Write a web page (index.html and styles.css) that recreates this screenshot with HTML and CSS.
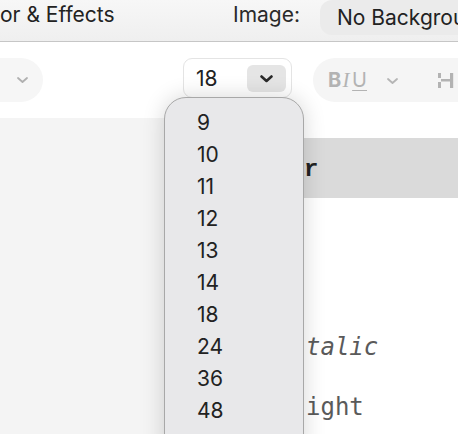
FILE: index.html
```html
<!DOCTYPE html>
<html>
<head>
<meta charset="utf-8">
<link rel="stylesheet" href="styles.css">
</head>
<body>
<div class="header">
  <span class="hdr-title">or &amp; Effects</span>
  <span class="hdr-label">Image:</span>
  <span class="hdr-pill">No Background</span>
</div>
<div class="toolbar">
  <div class="sel-left">
    <svg class="chev-light" width="11" height="6" viewBox="0 0 11 6"><polyline points="1,1 5.5,5 10,1" fill="none" stroke="#b0b0b0" stroke-width="1.8" stroke-linecap="round" stroke-linejoin="round"/></svg>
  </div>
  <div class="size-combo">
    <span class="size-val">18</span>
    <span class="size-btn">
      <svg width="13" height="8" viewBox="0 0 13 8"><polyline points="1.5,1.5 6.5,6 11.5,1.5" fill="none" stroke="#2a2a2a" stroke-width="2.6" stroke-linecap="round" stroke-linejoin="round"/></svg>
    </span>
  </div>
  <div class="style-pill">
    <span class="biu"><span class="b">B</span><span class="i">I</span><span class="u">U</span></span>
    <svg class="chev-style" width="11" height="6" viewBox="0 0 11 6"><polyline points="1,1 5.5,5 10,1" fill="none" stroke="#b5b5b5" stroke-width="1.8" stroke-linecap="round" stroke-linejoin="round"/></svg>
    <svg class="h-icon" width="16" height="15" viewBox="0 0 16 15"><rect x="0" y="0" width="3" height="5" fill="#b3b3b3"/><rect x="0" y="9" width="3" height="6" fill="#b3b3b3"/><rect x="3" y="6" width="10" height="2.5" fill="#b3b3b3"/><rect x="12" y="0" width="3.2" height="15" fill="#b3b3b3"/></svg>
  </div>
</div>
<div class="content">
  <div class="sidebar"></div>
  <div class="doc">
    <div class="line band"><span class="mono-bold">r</span></div>
    <div class="line">&nbsp;</div>
    <div class="line">&nbsp;</div>
    <div class="line shifted"><span class="mono-italic">talic</span></div>
    <div class="line shifted"><span class="mono-light">ight</span></div>
  </div>
</div>
<div class="menu">
  <div class="menu-item">9</div>
  <div class="menu-item">10</div>
  <div class="menu-item">11</div>
  <div class="menu-item">12</div>
  <div class="menu-item">13</div>
  <div class="menu-item">14</div>
  <div class="menu-item">18</div>
  <div class="menu-item">24</div>
  <div class="menu-item">36</div>
  <div class="menu-item">48</div>
</div>
</body>
</html>
```
FILE: styles.css
```css
html, body {
  margin: 0;
  padding: 0;
}
body {
  width: 458px;
  height: 434px;
  overflow: hidden;
  position: relative;
  background: #ffffff;
  font-family: Inter, "Noto Sans", sans-serif;
  color: #222222;
}
.header {
  height: 41px;
  border-bottom: 1px solid #c6c6c6;
  background: linear-gradient(#f7f7f7, #efefef);
  display: flex;
  align-items: flex-start;
  font-size: 21px;
  white-space: nowrap;
  overflow: hidden;
}
.hdr-title {
  line-height: 30px;
  width: 233px;
  flex: none;
}
.hdr-label {
  line-height: 30px;
  width: 87px;
  flex: none;
  color: #2a2a2a;
}
.hdr-pill {
  flex: 1;
  height: 35px;
  line-height: 35px;
  padding-left: 17px;
  background: #ebebeb;
  border-radius: 12px 0 0 12px;
}
.toolbar {
  height: 76px;
  box-sizing: border-box;
  padding-top: 16px;
  display: flex;
  align-items: flex-start;
  white-space: nowrap;
}
.sel-left {
  flex: none;
  margin-left: -40px;
  width: 83px;
  height: 44px;
  box-sizing: border-box;
  border-radius: 22px;
  background: #f6f6f6;
  display: flex;
  align-items: center;
  justify-content: flex-end;
  padding-right: 15px;
}
.size-combo {
  flex: none;
  margin-left: 140px;
  width: 109px;
  height: 40px;
  box-sizing: border-box;
  border: 1px solid #e4e4e4;
  border-radius: 9px;
  background: #ffffff;
  display: flex;
  align-items: flex-start;
  padding-left: 12px;
}
.size-val {
  flex: 1;
  font-size: 21px;
  line-height: 25px;
  margin-top: 7px;
}
.size-btn {
  width: 39px;
  height: 27px;
  margin-top: 6px;
  margin-right: 5px;
  border-radius: 6px;
  background: #e5e5e5;
  display: flex;
  align-items: center;
  justify-content: center;
}
.style-pill {
  flex: 1;
  margin-left: 21px;
  height: 44px;
  box-sizing: border-box;
  border-radius: 22px 0 0 22px;
  background: #f5f5f5;
  display: flex;
  align-items: center;
  padding-left: 15px;
  color: #b3b3b3;
}
.biu {
  display: flex;
  align-items: baseline;
  width: 39px;
  font-size: 20px;
}
.biu .b {
  font-weight: 700;
  width: 12px;
}
.biu .i {
  font-family: "Liberation Serif", serif;
  font-style: italic;
  font-size: 21px;
  width: 15px;
  text-align: center;
}
.biu .u {
  text-decoration: underline;
  text-underline-offset: 3px;
  text-decoration-thickness: 1px;
}
.chev-style {
  margin-left: 20px;
  margin-top: 2px;
}
.h-icon {
  margin-left: 40px;
}
.content {
  display: flex;
  height: 316px;
}
.sidebar {
  width: 234px;
  flex: none;
  background: #f4f4f4;
}
.doc {
  flex: 1;
  padding-top: 20px;
  background: #ffffff;
}
.line {
  height: 60px;
  padding-left: 70px;
  font-family: "DejaVu Sans Mono", monospace;
  font-size: 24px;
  line-height: 58px;
  white-space: nowrap;
  color: #5a5a5a;
}
.line.shifted {
  padding-left: 72px;
}
.band {
  background: #dadada;
  line-height: 60px;
}
.mono-bold {
  font-family: "Liberation Mono", monospace;
  font-weight: 700;
  color: #222222;
}
.mono-italic {
  font-style: italic;
}
.menu {
  position: absolute;
  left: 164px;
  top: 97px;
  width: 140px;
  height: 360px;
  box-sizing: border-box;
  border: 1px solid #a8a8a8;
  border-radius: 22px 22px 0 0;
  background: #e8e8ea;
  box-shadow: 0 0 22px rgba(0, 0, 0, 0.16);
  padding-top: 9px;
  padding-left: 32px;
}
.menu-item {
  height: 32px;
  line-height: 32px;
  font-size: 21px;
  color: #222222;
}
```
